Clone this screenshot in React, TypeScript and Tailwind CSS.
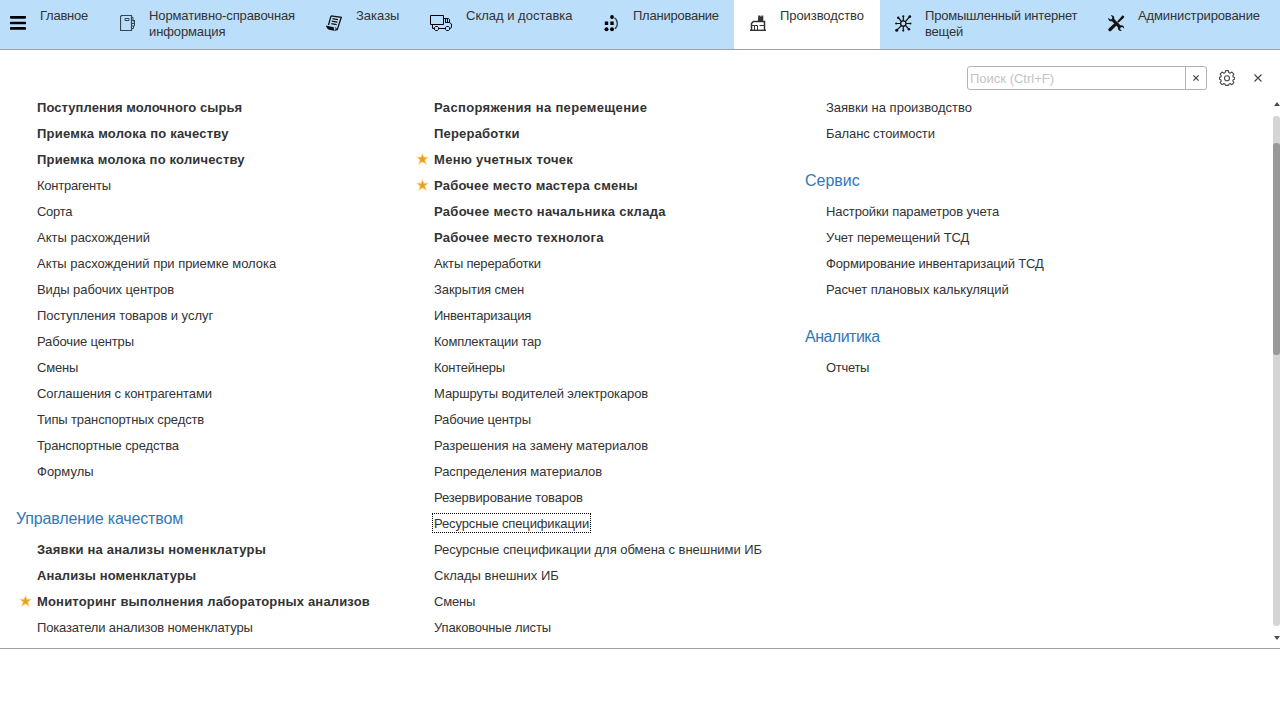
import type { ReactNode } from "react";

type Item = { label: string; tracking: string; bold?: boolean; star?: boolean; focused?: boolean };
type Group = { title?: string; titleTracking?: string; items: Item[] };

const b = (label: string, tracking = "", star = false): Item => ({ label, tracking, bold: true, star });
const n = (label: string, tracking = ""): Item => ({ label, tracking });

const rawMaterials: Group = {
  items: [
    b("Поступления молочного сырья", "tracking-[0.07px]"),
    b("Приемка молока по качеству", "tracking-[0.23px]"),
    b("Приемка молока по количеству", "tracking-[0.19px]"),
    n("Контрагенты", "tracking-[-0.25px]"),
    n("Сорта", "tracking-[-0.3px]"),
    n("Акты расхождений"),
    n("Акты расхождений при приемке молока", "tracking-[-0.03px]"),
    n("Виды рабочих центров", "tracking-[-0.07px]"),
    n("Поступления товаров и услуг", "tracking-[-0.04px]"),
    n("Рабочие центры", "tracking-[-0.15px]"),
    n("Смены", "tracking-[-0.2px]"),
    n("Соглашения с контрагентами", "tracking-[-0.1px]"),
    n("Типы транспортных средств", "tracking-[-0.12px]"),
    n("Транспортные средства", "tracking-[-0.13px]"),
    n("Формулы"),
  ],
};

const quality: Group = {
  title: "Управление качеством",
  titleTracking: "tracking-[-0.15px]",
  items: [
    b("Заявки на анализы номенклатуры", "tracking-[0.21px]"),
    b("Анализы номенклатуры", "tracking-[0.1px]"),
    b("Мониторинг выполнения лабораторных анализов", "tracking-[0.17px]", true),
    n("Показатели анализов номенклатуры", "tracking-[-0.16px]"),
  ],
};

const production: Group = {
  items: [
    b("Распоряжения на перемещение", "tracking-[0.33px]"),
    b("Переработки", "tracking-[0.2px]"),
    b("Меню учетных точек", "tracking-[0.3px]", true),
    b("Рабочее место мастера смены", "tracking-[0.22px]", true),
    b("Рабочее место начальника склада", "tracking-[0.3px]"),
    b("Рабочее место технолога", "tracking-[0.27px]"),
    n("Акты переработки", "tracking-[-0.19px]"),
    n("Закрытия смен", "tracking-[-0.07px]"),
    n("Инвентаризация", "tracking-[-0.22px]"),
    n("Комплектации тар", "tracking-[-0.2px]"),
    n("Контейнеры", "tracking-[-0.25px]"),
    n("Маршруты водителей электрокаров", "tracking-[-0.1px]"),
    n("Рабочие центры", "tracking-[-0.15px]"),
    n("Разрешения на замену материалов", "tracking-[-0.05px]"),
    n("Распределения материалов", "tracking-[-0.08px]"),
    n("Резервирование товаров", "tracking-[-0.13px]"),
    { label: "Ресурсные спецификации", tracking: "tracking-[-0.13px]", focused: true },
    n("Ресурсные спецификации для обмена с внешними ИБ", "tracking-[-0.04px]"),
    n("Склады внешних ИБ"),
    n("Смены", "tracking-[-0.2px]"),
    n("Упаковочные листы", "tracking-[-0.15px]"),
  ],
};

const requests: Group = {
  items: [n("Заявки на производство"), n("Баланс стоимости", "tracking-[-0.11px]")],
};

const service: Group = {
  title: "Сервис",
  items: [
    n("Настройки параметров учета", "tracking-[-0.11px]"),
    n("Учет перемещений ТСД", "tracking-[-0.1px]"),
    n("Формирование инвентаризаций ТСД", "tracking-[-0.14px]"),
    n("Расчет плановых калькуляций", "tracking-[-0.04px]"),
  ],
};

const analytics: Group = {
  title: "Аналитика",
  titleTracking: "tracking-[-0.52px]",
  items: [n("Отчеты", "tracking-[-0.3px]")],
};

function MenuIcon() {
  return (
    <svg width="16" height="16" viewBox="0 0 16 16">
      <path d="M1 2.3h14M1 8h14M1 13.4h14" stroke="#000" strokeWidth="2.7" strokeLinecap="round" />
    </svg>
  );
}

function BookIcon() {
  return (
    <svg className="ml-px" width="16" height="16" viewBox="0 0 16 16" fill="none" stroke="#37474f">
      <path d="M1.500.5h10v15H.5V1.500z" strokeWidth="1.200" />
      <path d="M5 3.500h4v2H5z" />
      <path d="M11.500 2.500h1.500v2.500M11.500 5.500h2.500v2M12 8.500h2.500V11H12M13.500 11v2.500h-2M14.500 5v6" />
    </svg>
  );
}

function OrdersIcon() {
  return (
    <svg width="16" height="16" viewBox="0 0 16 16" fill="none" stroke="#111">
      <path d="M5 .8 15.300 2.300 11.300 14.500 8.500 15.300M5 .8 2.500 10" strokeWidth="1.300" />
      <path d="M0 10.600 7.800 12.200 8 15.800 3 14.800C1.200 14.200.2 12.500 0 10.600z" fill="#111" stroke="none" />
      <path d="m6.500 3.700 5.500 1M5.800 6.200l5.600 1M5.200 8.700l5.500 1" strokeWidth="1.200" />
      <path d="m11.300 14.500-2.500-2" />
    </svg>
  );
}

function TruckIcon() {
  return (
    <svg width="22" height="17" viewBox="0 0 22 17" fill="none" stroke="#000">
      <path d="M.5.5h13v9H.5zM13.500 3.500h5l1 1v3l2 1.500v3.500l-1.500 1M2.500 10v3.500H4M9 13.500h6" />
      <path d="M15.500 4v3.500h4M17.500 4v3" />
      <path d="M5.500 11.500h2l1 1v2l-1 1h-2l-1-1v-2zM16.500 11.500h2l1 1v2l-1 1h-2l-1-1v-2z" />
    </svg>
  );
}

function PlanningIcon() {
  return (
    <svg className="ml-px" width="16" height="17" viewBox="0 0 16 17">
      <g fill="#000">
        <circle cx="8" cy="2" r="1.900" />
        <path d="M.8 6.500h3.400V10H.8zM6.300 6.500h3.400V10H6.300z" />
        <circle cx="2.500" cy="14.200" r="2" />
        <circle cx="8" cy="14.200" r="2" />
      </g>
      <path d="M10.500 2.800c3.700 2.500 3.700 9 .2 11" fill="none" stroke="#37474f" strokeWidth="1.300" />
    </svg>
  );
}

function FactoryIcon() {
  return (
    <svg width="16" height="16" viewBox="0 0 16 16" fill="none" stroke="#333">
      <path d="M8.300.5h1.700v1h.6v-1h1v1h.6v-1h1.100V6H7.900z" fill="#333" stroke="none" />
      <path d="M1.500 15V8.500L3.300 6.500h11.200V15" strokeWidth="1.500" />
      <path d="M0 15.300h16" strokeWidth="1.400" />
      <path d="M4.500 15v-4.500h3V15M9.500 10.500H14M1.500 10.500h3" />
    </svg>
  );
}

function NetworkIcon() {
  return (
    <svg width="17" height="17" viewBox="0 0 17 17" fill="none" stroke="#111">
      <circle cx="8.300" cy="8.500" r="2.700" strokeWidth="1.300" />
      <path
        d="M8.300 6V1.500M8.300 11v4.500M6 8.500H1.500M11 8.500h4.500M6.600 6.600 3.500 3M10.400 6.600l4-4.600M6.600 10.400 2 15M10.400 10.400l3.300 3.600"
        strokeWidth="1.200"
      />
      <g fill="#111" stroke="none">
        <circle cx="8.300" cy="1.300" r="1.100" />
        <circle cx="8.300" cy="15.600" r="1.100" />
        <circle cx="1.200" cy="8.500" r="1.100" />
        <circle cx="15.400" cy="8.500" r="1.100" />
        <circle cx="3.200" cy="2.800" r="1.200" />
        <circle cx="14.800" cy="1.700" r="1.400" />
        <circle cx="1.700" cy="15.200" r="1.500" />
        <circle cx="13.900" cy="14.200" r="1.300" />
      </g>
    </svg>
  );
}

function ToolsIcon() {
  return (
    <svg width="17" height="17" viewBox="0 0 17 17" fill="#111">
      <path d="M2.600.3C4.400-.2 6.300 1 6.300 3c0 .4 0 .7-.1 1l6.100 6.300c2.200-.6 4.200 1 3.900 3.300l-1.900-1.700-1.800.6-.4 1.700 1.800 1.800c-2.400.6-4.400-1.300-3.900-3.600L4 6.200C1.800 6.700-.1 4.900.4 2.700l1.900 1.700L4 3.900l.4-1.700z" />
      <path d="M14.800.2 16.400 1.800 15.300 3.300 10.400 7.800 9.200 6.600 13.500 1.400z" />
      <path d="M6.400 8.300 8.500 10.400 3.200 15.800C2.400 16.600 1.400 16.400.8 15.800.1 15.100.1 14.200.8 13.500z" />
    </svg>
  );
}

function GearIcon() {
  return (
    <svg width="16" height="16" viewBox="0 0 16 16" fill="none" stroke="#4d4d4d" strokeWidth="1.150" strokeLinejoin="round">
      <path d="M6.600.6h2.800l.4 2 1.300.6 1.800-1.100 2 2-1.100 1.700.5 1.200 1.200.4v1.800l-1.300.5-.4 1.200 1.100 1.800-2 2-1.700-1.100-1.400.6-.4 1.200H6.600l-.4-1.200-1.400-.6-1.700 1.100-2-2 1.100-1.800-.4-1.200L.5 9.200V7.400L1.800 7l.5-1.200-1.200-1.700 2-2 1.800 1.100 1.300-.6z" />
      <circle cx="8" cy="8.200" r="2.500" />
    </svg>
  );
}

function Cross({ size }: { size: number }) {
  return (
    <svg width={size} height={size} viewBox="0 0 8 8" stroke="#444" strokeWidth={size > 6 ? 1.1 : 1.6}>
      <path d="m.5.5 7 7M7.500.5l-7 7" />
    </svg>
  );
}

function Star() {
  return (
    <svg className="mr-[5px] shrink-0" width="13" height="12" viewBox="0 0 13 12">
      <path d="m6.500 0 1.600 3.800 4.800.2L9.200 7l1.700 4.900-4.400-2.700-4.400 2.700L3.800 7 .1 4l4.800-.2z" fill="#fbcb6b" />
      <path d="m6.500 2 1.100 2.700 3 .2-2.300 1.800.9 3.100-2.700-1.600-2.700 1.600.9-3.100-2.300-1.800 3-.2z" fill="#e3a022" />
    </svg>
  );
}

type Section = { label: ReactNode; icon: ReactNode; size: string; tracking?: string; active?: boolean };

const sections: Section[] = [
  { label: "Главное", icon: <MenuIcon />, size: "w-[104px] pl-[10px]", tracking: "tracking-[-0.25px]" },
  {
    label: <>Нормативно-справочная<br />информация</>,
    icon: <BookIcon />,
    size: "w-[205px] pl-[15px]",
    tracking: "tracking-[-0.12px]",
  },
  { label: "Заказы", icon: <OrdersIcon />, size: "w-[105px] pl-[17px]" },
  { label: "Склад и доставка", icon: <TruckIcon />, size: "w-[173px] pl-4" },
  { label: "Планирование", icon: <PlanningIcon />, size: "w-[147px] pl-4", tracking: "tracking-[-0.24px]" },
  {
    label: "Производство",
    icon: <FactoryIcon />,
    size: "w-[146px] pl-4",
    tracking: "tracking-[-0.07px]",
    active: true,
  },
  {
    label: <>Промышленный интернет<br />вещей</>,
    icon: <NetworkIcon />,
    size: "w-[212px] pl-[15px]",
    tracking: "tracking-[-0.2px]",
  },
  { label: "Администрирование", icon: <ToolsIcon />, size: "w-[188px] pl-4", tracking: "tracking-[-0.12px]" },
];

function SectionBar() {
  return (
    <nav className="flex h-[50px] border-b border-[#a0a0a0] bg-[#bbdefb]">
      {sections.map((s, i) => (
        <button
          key={i}
          className={`flex shrink-0 items-start pt-2 text-left leading-4 ${s.size} ${s.active ? "bg-white" : ""}`}
        >
          <span className={`mt-[7px] shrink-0 ${i === 3 ? "w-9" : "w-[30px]"}`}>{s.icon}</span>
          <span className={`whitespace-nowrap ${s.tracking ?? ""}`}>{s.label}</span>
        </button>
      ))}
    </nav>
  );
}

function CommandGroup({ group }: { group: Group }) {
  return (
    <section>
      {group.title && (
        <h2 className={`mt-[17px] mb-[-1px] text-base leading-9 text-[#3377b7] ${group.titleTracking ?? ""}`}>
          {group.title}
        </h2>
      )}
      <ul>
        {group.items.map((item) => (
          <li
            key={item.label}
            className={`flex h-[26px] items-center whitespace-nowrap ${item.star ? "pl-[3px]" : "pl-[21px]"}`}
          >
            {item.star && <Star />}
            <a
              className={`pt-0.5 leading-4 ${item.tracking} ${item.bold ? "font-bold" : ""} ${
                item.focused ? "-ml-0.5 border border-dotted border-black px-px" : ""
              }`}
            >
              {item.label}
            </a>
          </li>
        ))}
      </ul>
    </section>
  );
}

export default function App() {
  return (
    <div className="h-[720px] w-[1280px] overflow-hidden bg-white font-['Liberation_Sans',Arial,sans-serif] text-[13px] leading-[18px] text-[#333]">
      <SectionBar />
      <main className="flex h-[599px] flex-col border-b border-[#a0a0a0]">
        <div className="flex h-11 shrink-0 items-start justify-end pt-4 pr-[17px]">
          <div className="flex h-6 w-[240px] rounded-[3px] border border-[#b3b3b3]">
            <input
              className="min-w-0 flex-1 px-0.5 pt-0.5 outline-none placeholder:text-[#c4c4c4]"
              placeholder="Поиск (Ctrl+F)"
            />
            <button className="flex w-[21px] items-center justify-center border-l border-[#b3b3b3] pr-px">
              <Cross size={6} />
            </button>
          </div>
          <button className="mt-1 ml-3"><GearIcon /></button>
          <button className="mt-2 mr-px ml-[19px]"><Cross size={8} /></button>
        </div>
        <div className="flex min-h-0 flex-1 pl-4">
          <div className="w-[397px]">
            <CommandGroup group={rawMaterials} />
            <CommandGroup group={quality} />
          </div>
          <div className="w-[392px]">
            <CommandGroup group={production} />
          </div>
          <div className="flex-1">
            <CommandGroup group={requests} />
            <CommandGroup group={service} />
            <CommandGroup group={analytics} />
          </div>
          <div className="flex w-[7px] flex-col items-center pt-2">
            <svg width="6" height="4" viewBox="0 0 6 4"><path d="M0 4 3 0l3 4z" fill="#4d4d4d" /></svg>
            <div className="mt-[10px] h-[510px] w-[7px] rounded-[3px] bg-[#d5d5d5] pt-[27px]">
              <div className="h-[212px] rounded-[3px] bg-[#999]" />
            </div>
            <svg className="mt-[10px]" width="6" height="4" viewBox="0 0 6 4"><path d="M0 0h6L3 4z" fill="#4d4d4d" /></svg>
          </div>
        </div>
      </main>
    </div>
  );
}
